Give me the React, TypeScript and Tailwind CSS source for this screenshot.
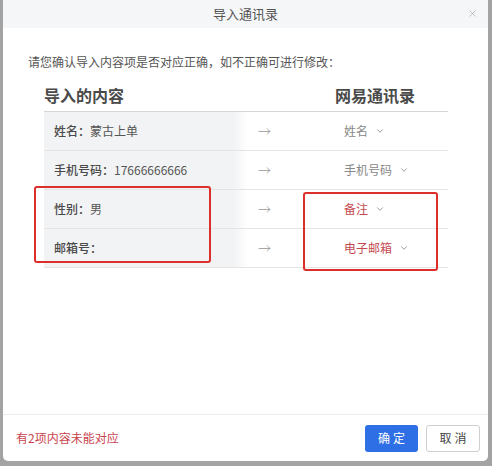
import { ChevronDown, X } from "lucide-react"

interface Row {
  label: string
  value: string
  target: string
  warn?: boolean
}

const rows: Row[] = [
  { label: "姓名：", value: "蒙古上单", target: "姓名" },
  { label: "手机号码：", value: "17666666666", target: "手机号码" },
  { label: "性别：", value: "男", target: "备注", warn: true },
  { label: "邮箱号：", value: "", target: "电子邮箱", warn: true },
]

export default function App() {
  return (
    <div
      className="w-[492px] h-[466px] bg-[#a3a3a3] overflow-hidden"
      style={{ fontFamily: '"Noto Sans CJK SC", "Noto Sans", sans-serif' }}
    >
      <div className="relative ml-[3px] w-[485px] h-[461px] bg-white rounded-b-[5px] flex flex-col">
        {/* Header */}
        <div className="h-[28px] bg-[#f5f6f7] flex items-center justify-center relative shrink-0">
          <span className="text-[13px] text-[#555]">导入通讯录</span>
          <X className="absolute right-[10px] top-[8px] w-[11px] h-[11px] text-[#aaa]" strokeWidth={1.5} />
        </div>

        {/* Body */}
        <div className="flex-1 pt-[25px] pl-[25px]">
          <p className="text-[12px] leading-[18px] text-[#555]">请您确认导入内容项是否对应正确，如不正确可进行修改：</p>

          <div className="ml-[16px] mt-[13px] w-[404px]">
            <div className="flex border-b border-[#d6d6d6] pb-[5px]">
              <div className="w-[291px] text-[16px] leading-[22px] font-bold text-[#4a4a4a]">导入的内容</div>
              <div className="text-[16px] leading-[22px] font-bold text-[#4a4a4a]">网易通讯录</div>
            </div>

            {rows.map((row) => (
              <div key={row.label} className="flex h-[39px] border-b border-[#e4e4e4]">
                <div className="w-[204px] flex items-center pl-[10px] bg-[linear-gradient(to_right,#f2f3f4_93%,#ffffff)] text-[12px] text-[#555]">
                  <span className="font-medium text-[#4a4a4a]">{row.label}</span>
                  <span>{row.value}</span>
                </div>
                <div className="w-[96px] flex items-center pl-[10px] text-[13px] font-light text-[#999]">→</div>
                <div
                  className={`flex items-center gap-[7px] text-[12px] ${row.warn ? "text-[#c44a4f]" : "text-[#888]"}`}
                >
                  <span>{row.target}</span>
                  <ChevronDown className="w-[10px] h-[10px] text-[#777]" strokeWidth={1.75} />
                </div>
              </div>
            ))}
          </div>
        </div>

        {/* Footer */}
        <div className="h-[47px] border-t border-[#ececec] flex items-center pl-[13px] pr-[8px] shrink-0">
          <span className="text-[12px] text-[#c9444e]">有2项内容未能对应</span>
          <div className="ml-auto flex gap-[8px]">
            <button className="w-[53px] h-[27px] rounded-[3px] bg-[#2f6fe6] text-white text-[12px] tracking-[3px] pl-[3px]">
              确定
            </button>
            <button className="w-[54px] h-[27px] rounded-[3px] border border-[#cfcfcf] bg-white text-[#444] text-[12px] tracking-[3px] pl-[3px]">
              取消
            </button>
          </div>
        </div>

        {/* Annotation boxes */}
        <div className="absolute left-[31px] top-[186px] w-[177px] h-[77px] border-2 border-[#dd2f2a] rounded-[3px]" />
        <div className="absolute left-[300px] top-[192px] w-[135px] h-[79px] border-2 border-[#dd2f2a] rounded-[3px]" />
      </div>
    </div>
  )
}
